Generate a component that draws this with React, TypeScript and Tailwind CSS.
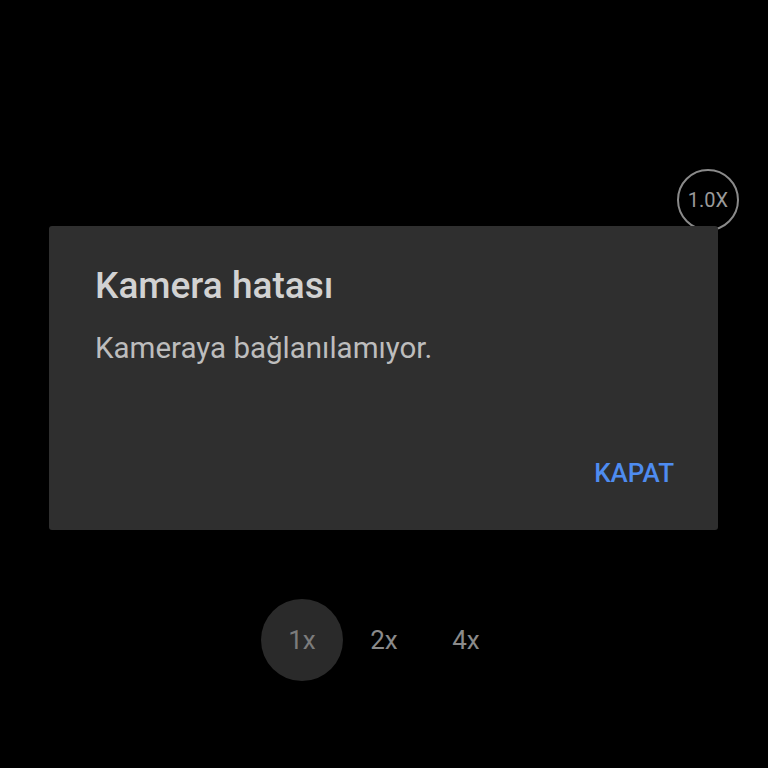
import React from 'react';

const font = { fontFamily: 'Roboto, "Noto Sans", sans-serif' };

export default function App() {
    return (
        <div
            className="relative h-[768px] w-[768px] overflow-hidden bg-black"
            style={font}
        >
            <div className="flex h-full flex-col">
                <div className="flex justify-end pt-[169px] pr-[29px]">
                    <div className="flex h-[62px] w-[62px] items-center justify-center rounded-full border-2 border-[#8a8a8a] text-[20px] text-[#9a9a9a]">
                        1.0X
                    </div>
                </div>
                <div className="mt-[368px] flex justify-center">
                    <div className="flex items-center">
                        <div className="flex h-[82px] w-[82px] items-center justify-center rounded-full bg-[#2a2a2a] text-[26px] text-[#7c7c7c]">
                            1x
                        </div>
                        <div className="flex h-[82px] w-[82px] items-center justify-center text-[26px] text-[#8a8a8a]">
                            2x
                        </div>
                        <div className="flex h-[82px] w-[82px] items-center justify-center text-[26px] text-[#8a8a8a]">
                            4x
                        </div>
                    </div>
                </div>
            </div>

            <div className="absolute top-[226px] left-[49px] flex h-[304px] w-[669px] flex-col rounded-[3px] bg-[#2f2f2f] pr-[44px] pl-[46px] shadow-lg">
                <h1 className="mt-[40px] text-[37px] leading-[40px] font-medium text-[#d2d2d2]">
                    Kamera hatası
                </h1>
                <p className="mt-[25px] text-[29.5px] leading-[34px] text-[#bdbdbd]">
                    Kameraya bağlanılamıyor.
                </p>
                <div className="mt-auto mb-[42px] flex justify-end">
                    <button className="text-[26px] leading-[30px] font-medium text-[#4e8cf0]">
                        KAPAT
                    </button>
                </div>
            </div>
        </div>
    );
}
